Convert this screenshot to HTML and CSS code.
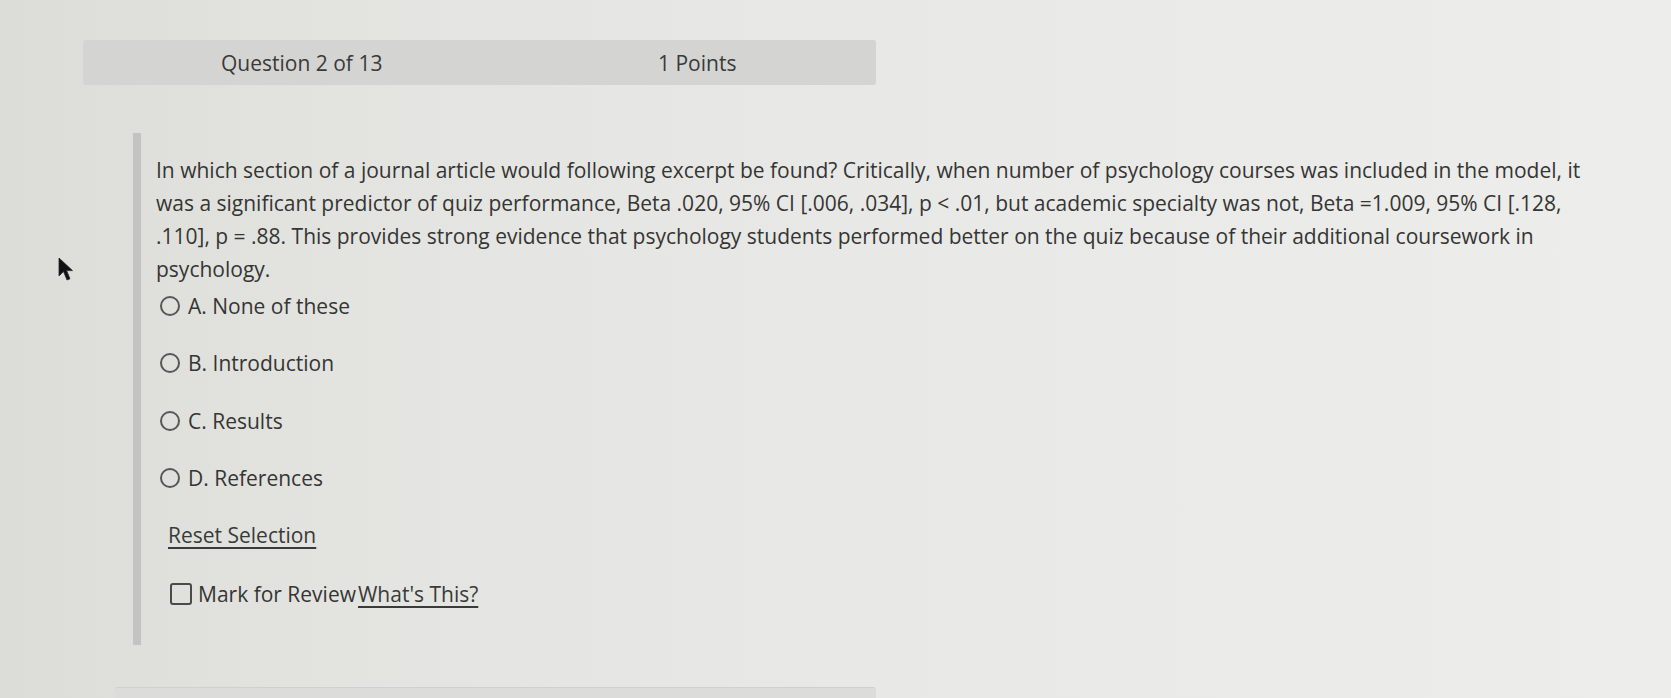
FILE: index.html
```html
<!DOCTYPE html>
<html lang="en">
<head>
<meta charset="utf-8">
<title>Question 2 of 13</title>
<link rel="stylesheet" href="styles.css">
</head>
<body>
<div class="page">
  <div class="qheader">
    <span class="qnum">Question 2 of 13</span>
    <span class="qpts">1 Points</span>
  </div>

  <div class="question">
    <p class="prompt">In which section of a journal article would following excerpt be found? Critically, when number of psychology courses was included in the model, it was a significant predictor of quiz performance, Beta .020, 95% CI [.006, .034], p &lt; .01, but academic specialty was not, Beta =1.009, 95% CI [.128, .110], p = .88. This provides strong evidence that psychology students performed better on the quiz because of their additional coursework in psychology.</p>
    <ul class="options">
      <li class="option"><span class="radio"></span><span class="label">A. None of these</span></li>
      <li class="option"><span class="radio"></span><span class="label">B. Introduction</span></li>
      <li class="option"><span class="radio"></span><span class="label">C. Results</span></li>
      <li class="option"><span class="radio"></span><span class="label">D. References</span></li>
    </ul>
    <a class="reset" href="#">Reset Selection</a>
    <div class="mark">
      <span class="checkbox"></span><span class="mark-label">Mark for Review</span><a class="whats" href="#">What's This?</a>
    </div>
  </div>

  <div class="next-header"></div>
</div>

<svg class="cursor" width="16" height="26" viewBox="0 0 16 26" aria-hidden="true">
  <path d="M1 1 L1 19 L5.5 14.5 L9 23 L12 21.8 L8.6 13.6 L14.5 13.6 Z" fill="#111" stroke="#2a2a2a" stroke-width="0.8" stroke-linejoin="round"/>
</svg>
</body>
</html>
```

FILE: styles.css
```css
html, body {
  margin: 0;
  padding: 0;
}

body {
  width: 1671px;
  height: 698px;
  overflow: hidden;
  position: relative;
  font-family: "Open Sans", "Noto Sans", "Liberation Sans", sans-serif;
  color: #353534;
  background: linear-gradient(90deg, #dcddd8 0%, #e3e4e0 20%, #e8e9e6 50%, #ebebe9 80%, #ededeb 100%);
}

.page {
  padding: 40px 0 0 83px;
}

.qheader {
  width: 793px;
  height: 45px;
  box-sizing: border-box;
  background: #d4d5d2;
  border-radius: 3px;
  display: grid;
  grid-template-columns: 437px auto;
  align-items: center;
  padding: 0 0 0 138px;
  font-size: 21px;
  color: #3a3a3a;
}

.question {
  margin: 48px 0 0 50px;
  border-left: 8px solid #c3c4c1;
  padding: 21px 0 36px 15px;
  width: 1460px;
  box-sizing: border-box;
}

.prompt {
  margin: 0;
  font-size: 21px;
  line-height: 33px;
  width: 1425px;
}

.options {
  list-style: none;
  margin: 5px 0 0;
  padding: 0 0 0 4px;
  display: flex;
  flex-direction: column;
  gap: 28.5px;
}

.option {
  height: 29px;
  display: flex;
  align-items: center;
  gap: 8px;
  font-size: 21px;
}

.radio {
  width: 16px;
  height: 16px;
  border: 2px solid #575756;
  border-radius: 50%;
  flex: none;
}

.reset {
  display: block;
  margin: 28px 0 0 12px;
  height: 29px;
  line-height: 29px;
  font-size: 21px;
  color: #3a3a3a;
  text-decoration: underline;
  text-underline-offset: 4px;
  width: max-content;
}

.mark {
  margin: 30px 0 0 14px;
  height: 29px;
  display: flex;
  align-items: center;
  font-size: 21px;
}

.checkbox {
  width: 18px;
  height: 18px;
  border: 2px solid #4a4a49;
  border-radius: 3px;
  margin-right: 6px;
  flex: none;
}

.whats {
  color: #3a3a3a;
  text-decoration: underline;
  text-underline-offset: 4px;
  margin-left: 2px;
}

.next-header {
  margin: 42px 0 0 32px;
  width: 761px;
  height: 14px;
  background: #dcdcda;
  border-top: 1px solid #d0d0ce;
  border-radius: 3px 3px 0 0;
}

.cursor {
  position: absolute;
  left: 58px;
  top: 257px;
}
```
